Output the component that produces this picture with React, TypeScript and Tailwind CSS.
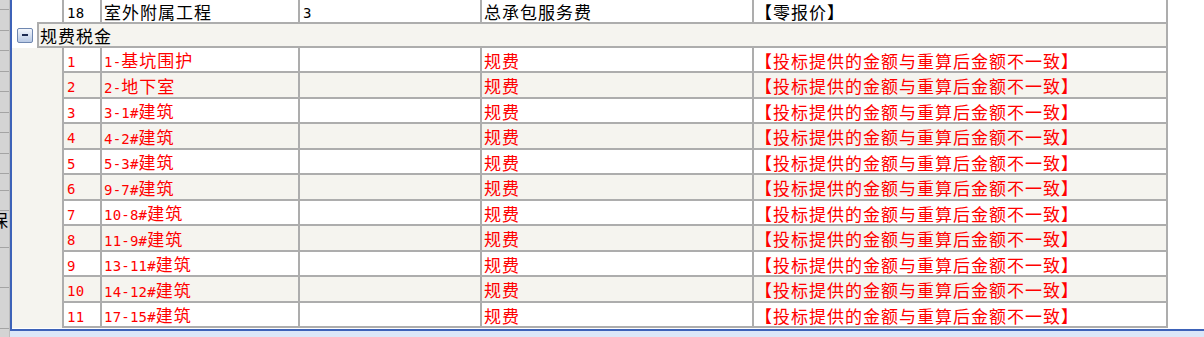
import React from "react";

const CJK = '"Noto Sans CJK SC", "Noto Sans", sans-serif';

function Txt({ s }: { s: string }) {
  const parts: { ascii: boolean; t: string }[] = [];
  for (const ch of s) {
    const ascii = ch.charCodeAt(0) < 128;
    const last = parts[parts.length - 1];
    if (last && last.ascii === ascii) last.t += ch;
    else parts.push({ ascii, t: ch });
  }
  return (
    <span className="whitespace-nowrap leading-none">
      {parts.map((p, i) =>
        p.ascii ? (
          <span key={i} className="font-['DejaVu_Sans_Mono'] text-[14px] tracking-[0.2px]">
            {p.t}
          </span>
        ) : (
          <span key={i} className="font-['Noto_Sans_CJK_SC'] text-[17px] tracking-[1px]">
            {p.t}
          </span>
        )
      )}
    </span>
  );
}

const rows: [string, string][] = [
  ["1", "1-基坑围护"],
  ["2", "2-地下室"],
  ["3", "3-1#建筑"],
  ["4", "4-2#建筑"],
  ["5", "5-3#建筑"],
  ["6", "9-7#建筑"],
  ["7", "10-8#建筑"],
  ["8", "11-9#建筑"],
  ["9", "13-11#建筑"],
  ["10", "14-12#建筑"],
  ["11", "17-15#建筑"],
];

function Cells({ c }: { c: string[] }) {
  return (
    <>
      <div className="w-[38px] h-full border-l-2 border-[#adadad] flex items-center pl-[3px] pt-[1px]">
        <Txt s={c[0]} />
      </div>
      <div className="w-[198px] h-full border-l-2 border-[#adadad] flex items-center pl-[2px] pt-[1px]">
        <Txt s={c[1]} />
      </div>
      <div className="w-[182px] h-full border-l-2 border-[#adadad] flex items-center pl-[3px] pt-[1px]">
        <Txt s={c[2]} />
      </div>
      <div className="w-[272px] h-full border-l-2 border-[#adadad] flex items-center pl-[2px] pt-[1px]">
        <Txt s={c[3]} />
      </div>
      <div className="w-[416px] h-full border-l-2 border-r-2 border-[#adadad] flex items-center pl-[1px] pt-[1px]">
        <Txt s={c[4]} />
      </div>
    </>
  );
}

const stripLines = [9, 30, 50, 71, 91, 112, 132, 153, 173, 190, 210, 247, 287, 328];

export default function App() {
  return (
    <div className="w-[1204px] h-[337px] flex overflow-hidden bg-white" style={{ fontFamily: CJK }}>
      {/* left gray strip */}
      <div className="relative w-[10px] h-full bg-[#d4d4d4] overflow-hidden border-r border-[#bdbdbd]">
        {stripLines.map((y) => (
          <div key={y} className="absolute left-0 right-0 h-px bg-[#a4a4a4]" style={{ top: y }} />
        ))}
        <div className="absolute left-[-9px] top-[211px] text-[17px] leading-none text-black font-['Noto_Sans_CJK_SC']">
          保
        </div>
      </div>
      {/* main */}
      <div className="flex-1 flex flex-col">
        <div className="h-[331px] border-l-2 border-b-2 border-[#3d62b8] bg-white overflow-hidden flex flex-col">
          {/* row 18 */}
          <div className="h-[22px] flex text-black shrink-0">
            <div className="w-[50px] h-full bg-white" />
            <Cells c={["18", "室外附属工程", "3", "总承包服务费", "【零报价】"]} />
          </div>
          {/* group row */}
          <div className="h-[26px] flex shrink-0 text-black">
            <div className="w-[25px] h-full bg-white flex items-center pl-[5px]">
              <div className="w-[16px] h-[15px] rounded-[2px] border border-[#6f87b0] bg-gradient-to-b from-[#f4f7fc] to-[#b9c9e4] flex items-center justify-center">
                <div className="w-[6px] h-[2px] bg-[#1d2b52]" />
              </div>
            </div>
            <div className="w-[1131px] h-full border-2 border-[#adadad] bg-[#f5f4ef] flex items-center pl-[1px] pt-[1px]">
              <Txt s="规费税金" />
            </div>
          </div>
          {rows.map(([n, name], i) => (
            <div
              key={n}
              className={
                "flex shrink-0 text-[#ff0000] " + (i % 2 === 0 ? "h-[25px]" : "h-[26px]")
              }
            >
              <div className="w-[50px] h-full bg-[#f5f4ef]" />
              <div
                className={
                  "flex h-full border-b-2 border-[#adadad] " +
                  (i % 2 === 0 ? "bg-white" : "bg-[#f5f4ef]")
                }
              >
                <Cells c={[n, name, "", "规费", "【投标提供的金额与重算后金额不一致】"]} />
              </div>
            </div>
          ))}
        </div>
        <div className="flex-1 bg-[#dbe7f8]" />
      </div>
    </div>
  );
}
